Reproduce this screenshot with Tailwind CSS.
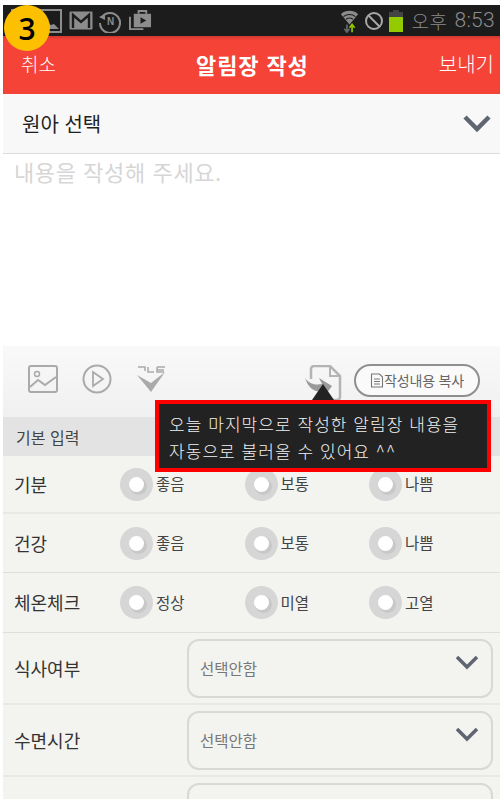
<!DOCTYPE html>
<html lang="ko">

<head>
    <meta charset="UTF-8">
    <meta name="viewport" content="width=device-width, initial-scale=1.0">
    <title>알림장 작성</title>
    <script src="https://cdn.jsdelivr.net/npm/@tailwindcss/browser@4"></script>
</head>

<body class="bg-white font-['Noto_Sans_CJK_KR',sans-serif] overflow-hidden">
    <div class="relative w-[500px] h-[799px] overflow-hidden pt-[5px] pl-[3px]">

        <!-- 단계 번호 -->
        <div class="absolute left-[4px] top-[5px] w-[46px] h-[46px] rounded-full bg-[#fdc000] flex items-center justify-center text-[30px] font-semibold text-black font-['Open_Sans',sans-serif] z-20">3</div>

        <!-- 상태바 -->
        <div class="h-[31px] bg-[#1c1c1c] flex items-center pl-[8px] pr-[5px] text-[#8c8c8c]">
            <svg width="51" height="24" viewBox="0 0 51 24" class="mr-[7px]" fill="none"><rect x="1" y="1" width="49" height="22" stroke="#8c8c8c" stroke-width="2"/><path d="M30 20l6-6 4 2 3-1 5 5z" fill="#8c8c8c"/></svg>
            <svg width="24" height="19" viewBox="0 0 24 19" class="mr-[5px]" fill="none"><rect x="0.500" y="0.500" width="23" height="18" rx="1" fill="#8c8c8c"/><path d="M4 17V4l8 7 8-7v13" stroke="#1c1c1c" stroke-width="2.400"/></svg>
            <svg width="24" height="24" viewBox="0 0 24 24" class="mr-[7px]" fill="none"><path d="M4 8a10 10 0 1 1-2 6" stroke="#8c8c8c" stroke-width="2"/><path d="M1 8l6-3v6z" fill="#8c8c8c"/><text x="12.500" y="16" text-anchor="middle" font-size="10" font-weight="700" fill="#8c8c8c" font-family="Liberation Sans">N</text></svg>
            <svg width="23" height="23" viewBox="0 0 24 24" fill="none"><path d="M1 8v13h14" stroke="#8c8c8c" stroke-width="2"/><path d="M5 5h18v14H5z" fill="#8c8c8c"/><path d="M10 5V2h8v3" stroke="#8c8c8c" stroke-width="2"/><path d="M12 8.500l6 3.500-6 3.500z" fill="#1c1c1c"/></svg>
            <div class="ml-auto flex items-center">
                <svg width="21" height="24" viewBox="0 0 22 28" class="mr-[4px]" fill="none"><path d="M1 6a15 15 0 0 1 20 0L11 18z" fill="#8c8c8c"/><path d="M4 9a11 11 0 0 1 14 0M7 12a7 7 0 0 1 8 0" stroke="#1c1c1c" stroke-width="1.200"/><path d="M8 18v9M5 23l3 4 3-4" stroke="#666" stroke-width="2"/><path d="M14 27v-8M11 22l3-4 3 4" stroke="#8fc400" stroke-width="2"/></svg>
                <svg width="20" height="20" viewBox="0 0 20 20" class="mr-[5px]" fill="none"><circle cx="10" cy="10" r="8" stroke="#a8a8a8" stroke-width="2"/><path d="M4.500 4.500l11 11" stroke="#a8a8a8" stroke-width="2"/></svg>
                <svg width="14" height="22" viewBox="0 0 14 22" class="mr-[8px]"><path d="M4 0h6v2h4v6H0V2h4z" fill="#444"/><rect y="7" width="14" height="15" fill="#93cb00"/></svg>
                <span class="text-[19px] leading-none font-light tracking-[0.5px]">오후</span>
                <span class="ml-[7px] text-[21px] leading-none font-['Roboto',sans-serif] font-light tracking-[0.3px]">8:53</span>
            </div>
        </div>

        <!-- 헤더 -->
        <div class="relative h-[58px] bg-[#f64338] flex items-center justify-between pl-[18px] text-white text-[19px] shadow-[inset_0_3px_3px_-1px_rgba(0,0,0,0.15)]">
            <span class="font-light mt-[-2px]">취소</span>
            <span class="absolute left-[193px] text-[22px] font-bold tracking-[0.9px] mt-[-2px]">알림장 작성</span>
            <span class="mr-[6px] text-[20px] font-light mt-[-2px]">보내기</span>
        </div>

        <!-- 원아 선택 -->
        <div class="h-[60px] bg-[#f8f8f8] border-b border-[#dcdcdc] flex items-center justify-between pl-[19px] pr-[8px]">
            <span class="text-[20px] text-[#1f1f1f]">원아 선택</span>
            <svg width="30" height="20" viewBox="0 0 30 20" fill="none"><path d="M3 3l12 12L27 3" stroke="#5f6672" stroke-width="4.500"/></svg>
        </div>

        <!-- 내용 -->
        <div class="h-[192px] bg-white pl-[11px] text-[22px] leading-[34px] text-[#d6d6d6] tracking-[0.6px]">내용을 작성해 주세요.</div>

        <!-- 도구 -->
        <div class="h-[71px] bg-gradient-to-b from-[#f9f9f9] to-[#f0f0f0] flex items-center pl-[25px] pr-[20px] pb-[5px]">
            <svg width="30" height="28" viewBox="0 0 30 28" fill="none" class="mr-[24px]"><rect x="1" y="1" width="28" height="26" rx="2" stroke="#aaa" stroke-width="2"/><circle cx="9" cy="9" r="2.500" stroke="#aaa" stroke-width="1.500"/><path d="M2 22l8-7 7 5 11-8" stroke="#aaa" stroke-width="2"/></svg>
            <svg width="30" height="30" viewBox="0 0 30 30" fill="none" class="mr-[24px]"><circle cx="15" cy="15" r="13.500" stroke="#aaa" stroke-width="2"/><path d="M11 8l10 7-10 7z" stroke="#aaa" stroke-width="1.800"/></svg>
            <svg width="30" height="28" viewBox="0 0 30 28" fill="none"><path d="M2 2h7v4M12 2v5h6M21 2h8M21 5h7M21 2v5h7" stroke="#aaa" stroke-width="1.500"/><path d="M1 10l14 8 14-11-14 20z" fill="#aaa"/></svg>
            <svg width="37" height="36" viewBox="0 0 37 36" fill="none" class="ml-auto mr-[12px] mt-[8px]"><path d="M6 14V4a3 3 0 0 1 3-3h16l10 10v21a3 3 0 0 1-3 3H10" stroke="#b4b4b4" stroke-width="2.500"/><path d="M25 2v9h9" stroke="#b4b4b4" stroke-width="2"/><path d="M0 13c5 7 12 7 17 6l-3-6 13 8-8 11-1-6c-9 2-15-4-18-13z" fill="#9a9a9a"/></svg>
            <div class="w-[126px] h-[33px] mt-[2px] border-2 border-[#8f8f8f] rounded-full flex items-center justify-center text-[14px] text-[#666] bg-[#fafafa]">
                <svg width="14" height="15" viewBox="0 0 14 15" fill="none"><path d="M1.500 1h8l3 3v10h-11zM4 6h6M4 8.500h6M4 11h6" stroke="#777" stroke-width="1.100"/></svg>
                <span class="tracking-[-0.2px]">작성내용 복사</span>
            </div>
        </div>

        <!-- 기본 입력 -->
        <div class="h-[39px] bg-[#e3e3e3] flex items-center pl-[13px] text-[16px] text-[#444]">기본 입력</div>

        <!-- 입력 행 -->
        <div class="bg-[#f3f3ef]">
            <div class="h-[58px] border-b-2 border-[#e8e8e4] grid grid-cols-[106px_124.500px_124.500px_1fr] items-center pl-[11px] text-[18px] text-[#333]">
                <span>기분</span>
                <label class="flex items-center text-[15.500px] text-[#444]"><span class="w-[33px] h-[33px] rounded-full bg-[#d6d6d6] flex items-center justify-center mr-[3px]"><span class="w-[15px] h-[15px] rounded-full bg-white shadow-[2px_2px_0_1px_#c8c8c8]"></span></span>좋음</label>
                <label class="flex items-center text-[15.500px] text-[#444]"><span class="w-[33px] h-[33px] rounded-full bg-[#d6d6d6] flex items-center justify-center mr-[3px]"><span class="w-[15px] h-[15px] rounded-full bg-white shadow-[2px_2px_0_1px_#c8c8c8]"></span></span>보통</label>
                <label class="flex items-center text-[15.500px] text-[#444]"><span class="w-[33px] h-[33px] rounded-full bg-[#d6d6d6] flex items-center justify-center mr-[3px]"><span class="w-[15px] h-[15px] rounded-full bg-white shadow-[2px_2px_0_1px_#c8c8c8]"></span></span>나쁨</label>
            </div>
            <div class="h-[59px] border-b border-[#dededa] grid grid-cols-[106px_124.500px_124.500px_1fr] items-center pl-[11px] text-[18px] text-[#333]">
                <span>건강</span>
                <label class="flex items-center text-[15.500px] text-[#444]"><span class="w-[33px] h-[33px] rounded-full bg-[#d6d6d6] flex items-center justify-center mr-[3px]"><span class="w-[15px] h-[15px] rounded-full bg-white shadow-[2px_2px_0_1px_#c8c8c8]"></span></span>좋음</label>
                <label class="flex items-center text-[15.500px] text-[#444]"><span class="w-[33px] h-[33px] rounded-full bg-[#d6d6d6] flex items-center justify-center mr-[3px]"><span class="w-[15px] h-[15px] rounded-full bg-white shadow-[2px_2px_0_1px_#c8c8c8]"></span></span>보통</label>
                <label class="flex items-center text-[15.500px] text-[#444]"><span class="w-[33px] h-[33px] rounded-full bg-[#d6d6d6] flex items-center justify-center mr-[3px]"><span class="w-[15px] h-[15px] rounded-full bg-white shadow-[2px_2px_0_1px_#c8c8c8]"></span></span>나쁨</label>
            </div>
            <div class="h-[60px] border-b border-[#dededa] grid grid-cols-[106px_124.500px_124.500px_1fr] items-center pl-[11px] text-[18px] text-[#333]">
                <span>체온체크</span>
                <label class="flex items-center text-[15.500px] text-[#444]"><span class="w-[33px] h-[33px] rounded-full bg-[#d6d6d6] flex items-center justify-center mr-[3px]"><span class="w-[15px] h-[15px] rounded-full bg-white shadow-[2px_2px_0_1px_#c8c8c8]"></span></span>정상</label>
                <label class="flex items-center text-[15.500px] text-[#444]"><span class="w-[33px] h-[33px] rounded-full bg-[#d6d6d6] flex items-center justify-center mr-[3px]"><span class="w-[15px] h-[15px] rounded-full bg-white shadow-[2px_2px_0_1px_#c8c8c8]"></span></span>미열</label>
                <label class="flex items-center text-[15.500px] text-[#444]"><span class="w-[33px] h-[33px] rounded-full bg-[#d6d6d6] flex items-center justify-center mr-[3px]"><span class="w-[15px] h-[15px] rounded-full bg-white shadow-[2px_2px_0_1px_#c8c8c8]"></span></span>고열</label>
            </div>
            <div class="h-[72px] border-b-2 border-[#e8e8e4] flex items-center pl-[11px] pr-[7px] text-[18px] text-[#333]">
                <span class="w-[173px]">식사여부</span>
                <div class="flex-1 h-[59px] rounded-[12px] border-2 border-[#d8d8d4] flex justify-between pl-[11px] pr-[12px] text-[15.500px] text-[#777]">
                    <span class="mt-[16px]">선택안함</span>
                    <svg width="24" height="15" viewBox="0 0 24 15" fill="none" class="mt-[14px]"><path d="M2 2l10 10L22 2" stroke="#5f6672" stroke-width="3.500"/></svg>
                </div>
            </div>
            <div class="h-[72px] border-b-2 border-[#e8e8e4] flex items-center pl-[11px] pr-[7px] text-[18px] text-[#333]">
                <span class="w-[173px]">수면시간</span>
                <div class="flex-1 h-[59px] rounded-[12px] border-2 border-[#d8d8d4] flex justify-between pl-[11px] pr-[12px] text-[15.500px] text-[#777]">
                    <span class="mt-[16px]">선택안함</span>
                    <svg width="24" height="15" viewBox="0 0 24 15" fill="none" class="mt-[14px]"><path d="M2 2l10 10L22 2" stroke="#5f6672" stroke-width="3.500"/></svg>
                </div>
            </div>
            <div class="h-[30px] flex pl-[184px] pr-[7px] pt-[6px]">
                <div class="flex-1 h-[58px] rounded-[12px] border-2 border-[#d8d8d4]"></div>
            </div>
        </div>

        <!-- 안내 말풍선 -->
        <div class="absolute left-[155px] top-[400px] w-[336px] h-[72px] border-[4px] border-[#fe0000] bg-[#222222] pl-[10px] pt-[6px] text-[17px] leading-[27px] text-[#f2f2f2] tracking-[1.05px] font-light z-10">
            <p>오늘 마지막으로 작성한 알림장 내용을</p>
            <p>자동으로 불러올 수 있어요 ^^</p>
        </div>
        <div class="absolute left-[312px] top-[384px] w-0 h-0 border-x-[11px] border-x-transparent border-b-[16px] border-b-[#222222] z-10"></div>
    </div>
</body>

</html>
